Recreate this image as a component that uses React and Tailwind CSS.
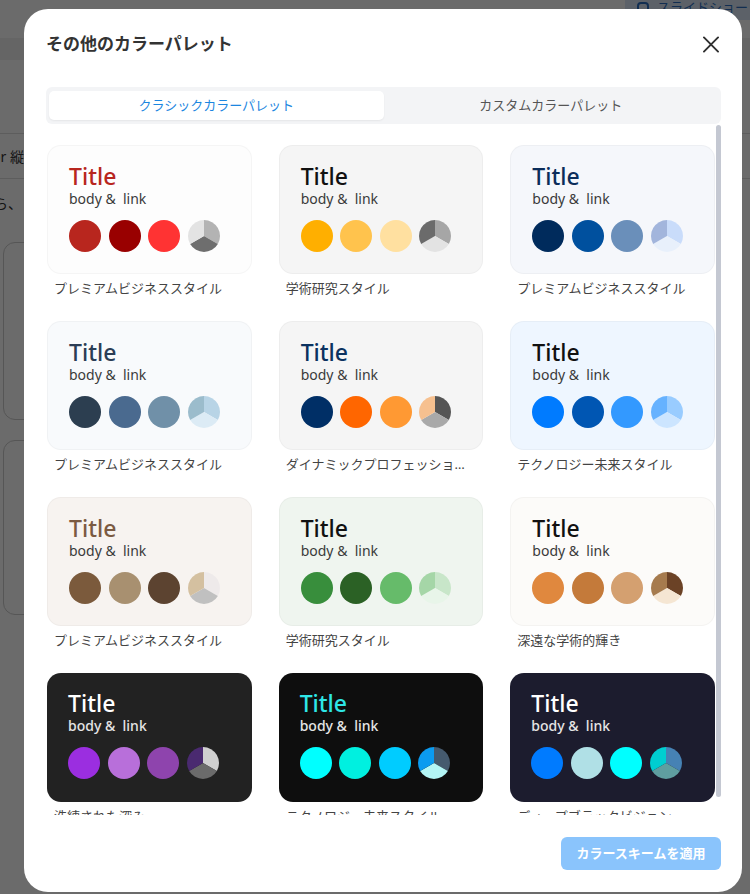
import { useState } from "react";

const palettes = [
  { name: "プレミアムビジネススタイル", bg: "bg-[#fdfdfd]", title: "text-[#b8261e]", body: "text-[#3a3a3a]", dots: ["#b8261e", "#990000", "#ff3333"], pie: ["#b3b3b3", "#6e6e6e", "#e3e3e3"] },
  { name: "学術研究スタイル", bg: "bg-[#f5f5f5]", title: "text-[#111111]", body: "text-[#3a3a3a]", dots: ["#ffaf00", "#ffc34d", "#ffe0a0"], pie: ["#a6a6a6", "#e3e3e3", "#6b6b6b"] },
  { name: "プレミアムビジネススタイル", bg: "bg-[#f5f7fb]", title: "text-[#0b2d5a]", body: "text-[#3a3a3a]", dots: ["#002b5c", "#00509e", "#6a8fba"], pie: ["#c9dcfa", "#e8f0fb", "#a2b5dc"] },
  { name: "プレミアムビジネススタイル", bg: "bg-[#f8fafc]", title: "text-[#2b3d55]", body: "text-[#3a3a3a]", dots: ["#2c3e50", "#4a6a8f", "#7090a8"], pie: ["#b8d4e6", "#dcebf5", "#9bbccc"] },
  { name: "ダイナミックプロフェッショナルスタイル", bg: "bg-[#f5f5f5]", title: "text-[#0b3260]", body: "text-[#3a3a3a]", dots: ["#002f66", "#ff6600", "#ff9933"], pie: ["#555555", "#a9a9a9", "#f6c08f"] },
  { name: "テクノロジー未来スタイル", bg: "bg-[#eef6ff]", title: "text-[#111111]", body: "text-[#3a3a3a]", dots: ["#007bff", "#0056b3", "#3399ff"], pie: ["#99ccff", "#cce5ff", "#66b2ff"] },
  { name: "プレミアムビジネススタイル", bg: "bg-[#f7f3f0]", title: "text-[#7b5a42]", body: "text-[#3a3a3a]", dots: ["#7b5a3c", "#a89070", "#5c4330"], pie: ["#eeeaea", "#c0c0c0", "#d4c0a0"] },
  { name: "学術研究スタイル", bg: "bg-[#eff5ef]", title: "text-[#111111]", body: "text-[#3a3a3a]", dots: ["#388e3c", "#2b6125", "#66bb6a"], pie: ["#c8e6c9", "#e8f5e9", "#a5d6a7"] },
  { name: "深遠な学術的輝き", bg: "bg-[#fcfbf9]", title: "text-[#111111]", body: "text-[#3a3a3a]", dots: ["#e0883e", "#c47a3a", "#d4a070"], pie: ["#6b4226", "#f5e6d3", "#a67b4e"] },
  { name: "洗練された深み", bg: "bg-[#222222]", title: "text-white", body: "text-[#e5e5e5] font-medium", dark: true, dots: ["#9b2ee0", "#b86fda", "#8e44ad"], pie: ["#d0d0d0", "#6b6b6b", "#4a2a70"] },
  { name: "テクノロジー未来スタイル", bg: "bg-[#0e0e0e]", title: "text-[#2ee6e6]", body: "text-[#e5e5e5] font-medium", dark: true, dots: ["#00ffff", "#00f0e0", "#00ccff"], pie: ["#455a6e", "#b3f5f5", "#0b9bf0"] },
  { name: "ディープブラックビジョン", bg: "bg-[#1c1c2e]", title: "text-white", body: "text-[#e5e5e5] font-medium", dark: true, dots: ["#007bff", "#b0e0e6", "#00ffff"], pie: ["#4682b4", "#5f9ea0", "#00ced1"] },
];

const Pie = ({ colors }) => (
  <svg width="32" height="32" viewBox="0 0 32 32" className="shrink-0">
    <path d="M16 16 L16 0 A16 16 0 0 1 29.856 24 Z" fill={colors[0]} />
    <path d="M16 16 L29.856 24 A16 16 0 0 1 2.144 24 Z" fill={colors[1]} />
    <path d="M16 16 L2.144 24 A16 16 0 0 1 16 0 Z" fill={colors[2]} />
  </svg>
);

const PaletteCard = ({ p, selected, onSelect }) => (
  <div className="flex flex-col cursor-pointer" onClick={onSelect}>
    <div
      className={`h-[129px] rounded-[14px] pt-[16px] pl-[21px] ${p.bg} ${
        p.dark ? "" : "border border-black/[0.03]"
      } ${selected ? "ring-2 ring-[#3b9cf5]" : ""}`}
    >
      <div className={`text-[23px] leading-[28px] font-medium ${p.title}`}>Title</div>
      <div className={`text-[14px] leading-[18px] whitespace-pre ${p.body}`}>body &  link</div>
      <div className="flex items-center gap-[7.5px] mt-[12px]">
        {p.dots.map((c, i) => (
          <span key={i} className="w-8 h-8 rounded-full shrink-0" style={{ backgroundColor: c }} />
        ))}
        <Pie colors={p.pie} />
      </div>
    </div>
    <div className="mt-[5px] px-[7px] text-[13px] leading-[18px] text-[#444] truncate">{p.name}</div>
  </div>
);

export default function App() {
  const [tab, setTab] = useState("classic");
  const [selected, setSelected] = useState(null);

  return (
    <div
      className="relative w-[750px] h-[894px] overflow-hidden bg-white"
      style={{ fontFamily: '"Noto Sans", "Noto Sans CJK JP", sans-serif' }}
    >
      {/* page underneath */}
      <div className="h-[38px] flex justify-end items-start">
        <div className="mt-[-4px] mr-[-10px] h-[24px] px-3 flex items-center gap-2 rounded bg-[#dbe8f8] text-[#2d6fc0] text-[13px]">
          <span className="w-[12px] h-[12px] border-2 border-[#2d6fc0] rounded-sm" />
          スライドショー
        </div>
      </div>
      <div className="h-[22px] bg-[#f1f1f1]" />
      <div className="flex flex-col">
        <div className="mt-[73px] border-t border-[#dddddd] h-[45px] flex items-center text-[14px] text-[#333]">
          <span className="-ml-[8px]">or 縦</span>
        </div>
        <div className="border-t border-[#dddddd] h-[50px] flex items-center text-[14px] text-[#333]">
          <span className="-ml-[6px]">ら、</span>
        </div>
        <div className="ml-[3px] mt-[14px] w-[200px] h-[178px] rounded-xl border border-[#cccccc]" />
        <div className="ml-[3px] mt-[20px] w-[200px] h-[175px] rounded-xl border border-[#cccccc]" />
      </div>

      {/* backdrop */}
      <div className="absolute inset-0 bg-black/[0.58]" />

      {/* modal */}
      <div className="absolute left-[24px] top-[9px] w-[718px] h-[883px] bg-white rounded-[24px] flex flex-col pl-[22px] pr-[21px]">
        <div className="pt-[24px] flex items-center justify-between">
          <h2 className="text-[17px] leading-[22px] font-bold text-[#333]">その他のカラーパレット</h2>
          <button className="mr-[2px] w-[16px] h-[16px] flex items-center justify-center">
            <svg width="17" height="17" viewBox="0 0 17 17">
              <path d="M1 1 L16 16 M16 1 L1 16" stroke="#2f2f2f" strokeWidth="2" strokeLinecap="round" />
            </svg>
          </button>
        </div>

        <div className="mt-[32px] h-[37px] rounded-md bg-[#f3f4f6] px-[3px] py-[4px] flex">
          <button
            onClick={() => setTab("classic")}
            className={`flex-1 rounded-[5px] text-[13px] ${
              tab === "classic" ? "bg-white text-[#1c86e0] shadow-[0_1px_2px_rgba(0,0,0,0.06)]" : "text-[#555]"
            }`}
          >
            クラシックカラーパレット
          </button>
          <button
            onClick={() => setTab("custom")}
            className={`flex-1 rounded-[5px] text-[13px] ${
              tab === "custom" ? "bg-white text-[#1c86e0] shadow-[0_1px_2px_rgba(0,0,0,0.06)]" : "text-[#555]"
            }`}
          >
            カスタムカラーパレット
          </button>
        </div>

        <div className="mt-px h-[690px] flex">
          <div className="flex-1 overflow-hidden">
            <div className="pl-px pt-[20px] pb-[8px] grid grid-cols-3 gap-x-[27px] gap-y-[24px] w-[669px]">
              {palettes.map((p, i) => (
                <PaletteCard key={i} p={p} selected={selected === i} onSelect={() => setSelected(i)} />
              ))}
            </div>
          </div>
          <div className="w-[6px] shrink-0">
            <div className="h-[672px] w-[5px] ml-px rounded-full bg-[#c4c8d2]" />
          </div>
        </div>

        <div className="pt-[22px] flex justify-end">
          <button className="h-[33px] w-[160px] rounded-md bg-[#8ac4fc] text-white text-[13px] font-bold">
            カラースキームを適用
          </button>
        </div>
      </div>
    </div>
  );
}
